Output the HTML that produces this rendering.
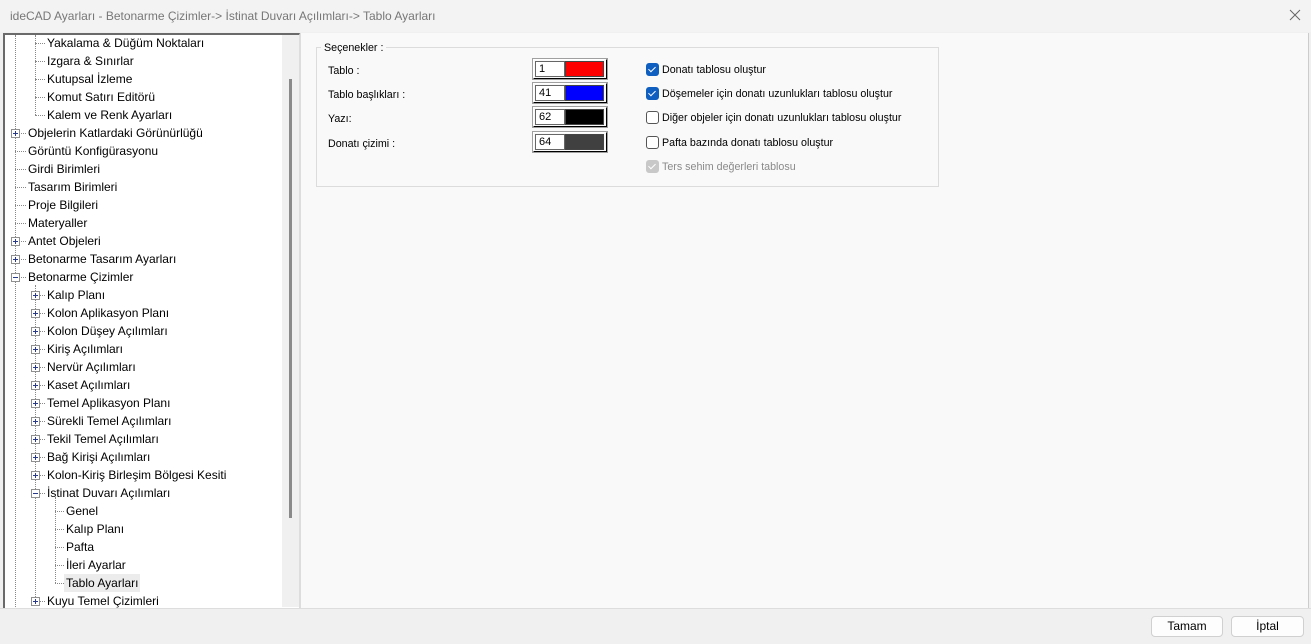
<!DOCTYPE html>
<html><head><meta charset="utf-8"><style>
*{margin:0;padding:0;box-sizing:border-box}
body{width:1311px;height:644px;overflow:hidden;background:#f0f0f0;font-family:"Liberation Sans",sans-serif;font-size:12px;color:#000;position:relative}
.a{position:absolute;white-space:nowrap}
.t{position:absolute;white-space:nowrap;line-height:16px;font-size:12px}
.g{font-size:10.7px}
.vl{position:absolute;width:0;border-left:1px dotted #888}
.hl{position:absolute;height:0;border-top:1px dotted #888}
.bx{position:absolute;width:9px;height:9px;border:1px solid #909090;background:#fff}
.bx:before{content:"";position:absolute;left:1px;top:3px;width:5px;height:1px;background:#2a3a8a}
.bx.p:after{content:"";position:absolute;left:3px;top:1px;width:1px;height:5px;background:#2a3a8a}
.sw{position:absolute;width:74px;height:20px;border:1px solid #fff;border-right-color:#000;border-bottom-color:#000;outline:1px solid #a0a0a0}
.sw .n{position:absolute;left:1px;top:1px;width:30px;height:16px;border:1px solid #666;background:#fff;padding-left:3px;line-height:14px;font-size:11px}
.sw .c{position:absolute;left:31px;top:1px;width:39px;height:16px;border:1px solid #444}
.cb{position:absolute;width:13px;height:13px;border-radius:3px;border:1px solid #555;background:#fff}
.cb.on{background:#0f5fc0;border-color:#0f5fc0}
.cb.on:after,.cb.dis:after{content:"";position:absolute;left:3px;top:1px;width:3px;height:6px;border:solid #fff;border-width:0 1.5px 1.5px 0;transform:rotate(45deg)}
.cb.dis{background:#c8c8c8;border-color:#c8c8c8}
.btn{position:absolute;height:21px;border:1px solid #d0d0d0;border-radius:4px;background:#fdfdfd;text-align:center;line-height:19px}
</style></head><body>
<div class="a" style="left:0;top:0;width:1311px;height:32px;background:#f3f3f3"></div>
<div class="t" style="left:10px;top:8px;color:#777">ideCAD Ayarları - Betonarme Çizimler-&gt; İstinat Duvarı Açılımları-&gt; Tablo Ayarları</div>
<svg class="a" style="left:1289px;top:9px" width="12" height="12"><path d="M1 1L11 11M11 1L1 11" stroke="#666" stroke-width="1"/></svg>

<div class="a" style="left:3px;top:33px;width:297px;height:575px;background:#fff;border-top:2px solid #6a6a6a;border-left:2px solid #6a6a6a;border-right:1px solid #ddd"></div>
<div class="a" style="left:282px;top:35px;width:17px;height:572px;background:#f0f0f0"></div>
<div class="a" style="left:289px;top:79px;width:3px;height:439px;background:#8a8a8a"></div>
<div class="a" style="left:300px;top:33px;width:1009px;height:575px;background:#f9f9f9;border-left:1px solid #ddd;border-right:1px solid #ccc"></div>

<div class="vl" style="left:15px;top:35px;height:244px"></div>
<div class="vl" style="left:15px;top:279px;height:328px"></div>
<div class="vl" style="left:35px;top:35px;height:80px"></div>
<div class="vl" style="left:35px;top:285px;height:316px"></div>
<div class="vl" style="left:55px;top:497px;height:86px"></div>

<div id="tree"></div>
<script>
var rows=[
[1,"Yakalama &amp; Düğüm Noktaları",0],[1,"Izgara &amp; Sınırlar",0],[1,"Kutupsal İzleme",0],[1,"Komut Satırı Editörü",0],[1,"Kalem ve Renk Ayarları",0],
[0,"Objelerin Katlardaki Görünürlüğü","p"],[0,"Görüntü Konfigürasyonu",0],[0,"Girdi Birimleri",0],[0,"Tasarım Birimleri",0],[0,"Proje Bilgileri",0],[0,"Materyaller",0],
[0,"Antet Objeleri","p"],[0,"Betonarme Tasarım Ayarları","p"],[0,"Betonarme Çizimler","m"],
[1,"Kalıp Planı","p"],[1,"Kolon Aplikasyon Planı","p"],[1,"Kolon Düşey Açılımları","p"],[1,"Kiriş Açılımları","p"],[1,"Nervür Açılımları","p"],[1,"Kaset Açılımları","p"],[1,"Temel Aplikasyon Planı","p"],[1,"Sürekli Temel Açılımları","p"],[1,"Tekil Temel Açılımları","p"],[1,"Bağ Kirişi Açılımları","p"],[1,"Kolon-Kiriş Birleşim Bölgesi Kesiti","p"],[1,"İstinat Duvarı Açılımları","m"],
[2,"Genel",0],[2,"Kalıp Planı",0],[2,"Pafta",0],[2,"İleri Ayarlar",0],[2,"Tablo Ayarları",0,1],[1,"Kuyu Temel Çizimleri","p"]];
var h="";
rows.forEach(function(r,i){
 var cy=43+i*18, lx=15+r[0]*20, tx=28+r[0]*19;
 h+='<div class="hl" style="left:'+lx+'px;top:'+cy+'px;width:'+(tx-lx-2)+'px"></div>';
 if(r[2]) h+='<div class="bx'+(r[2]=="p"?" p":"")+'" style="left:'+(lx-4)+'px;top:'+(cy-4)+'px"></div>';
 if(r[3]) h+='<div class="a" style="left:'+(tx-2)+'px;top:'+(cy-9)+'px;width:76px;height:18px;background:#ececec"></div>';
 h+='<div class="t" style="left:'+tx+'px;top:'+(cy-8)+'px">'+r[1]+'</div>';
});
document.getElementById("tree").innerHTML=h;
</script>

<div class="a" style="left:316px;top:47px;width:623px;height:140px;border:1px solid #dcdcdc"></div>
<div class="t g" style="left:321px;top:40px;background:#f9f9f9;padding:0 3px">Seçenekler :</div>
<div class="t g" style="left:328px;top:63px">Tablo :</div>
<div class="t g" style="left:328px;top:87px">Tablo başlıkları :</div>
<div class="t g" style="left:328px;top:111px">Yazı:</div>
<div class="t g" style="left:328px;top:136px">Donatı çizimi :</div>
<div class="sw" style="left:533px;top:59px"><div class="n">1</div><div class="c" style="background:#f00"></div></div>
<div class="sw" style="left:533px;top:83px"><div class="n">41</div><div class="c" style="background:#00f"></div></div>
<div class="sw" style="left:533px;top:107px"><div class="n">62</div><div class="c" style="background:#000"></div></div>
<div class="sw" style="left:533px;top:132px"><div class="n">64</div><div class="c" style="background:#404040"></div></div>

<div class="cb on" style="left:646px;top:63px"></div><div class="t g" style="left:662px;top:62px">Donatı tablosu oluştur</div>
<div class="cb on" style="left:646px;top:87px"></div><div class="t g" style="left:662px;top:86px">Döşemeler için donatı uzunlukları tablosu oluştur</div>
<div class="cb" style="left:646px;top:111px"></div><div class="t g" style="left:662px;top:110px">Diğer objeler için donatı uzunlukları tablosu oluştur</div>
<div class="cb" style="left:646px;top:136px"></div><div class="t g" style="left:662px;top:135px">Pafta bazında donatı tablosu oluştur</div>
<div class="cb dis" style="left:646px;top:160px"></div><div class="t g" style="left:662px;top:159px;color:#8a8a8a">Ters sehim değerleri tablosu</div>

<div class="a" style="left:0;top:608px;width:1311px;height:1px;background:#ddd"></div>
<div class="btn" style="left:1151px;top:616px;width:72px">Tamam</div>
<div class="btn" style="left:1231px;top:616px;width:73px">İptal</div>
</body></html>
